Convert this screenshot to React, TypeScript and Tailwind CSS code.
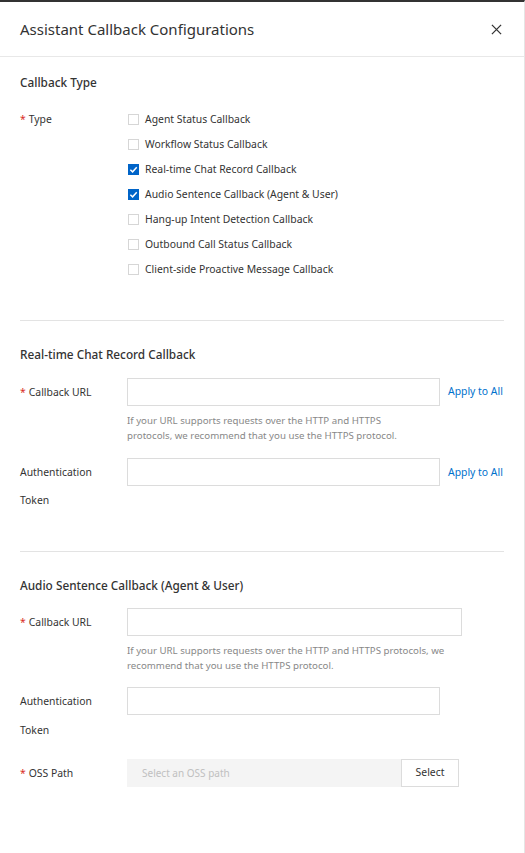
import React from "react";

const font = { fontFamily: '"Noto Sans", "Open Sans", sans-serif' };

const Check: React.FC<{ checked?: boolean; label: string }> = ({ checked, label }) => (
  <label className="flex items-center h-[25px] gap-[6px]">
    {checked ? (
      <span className="w-[11px] h-[11px] bg-[#0064c8] flex items-center justify-center">
        <svg width="9" height="9" viewBox="0 0 10 10">
          <path d="M1.5 5.2 L4 7.6 L8.6 2.4" stroke="white" strokeWidth="1.6" fill="none" />
        </svg>
      </span>
    ) : (
      <span className="w-[11px] h-[11px] border border-[#d6d6d6] bg-white" />
    )}
    <span className="text-[10.4px] text-[#333]">{label}</span>
  </label>
);

const Req = () => <span className="text-[#d93026] mr-[3px]">*</span>;

const Input: React.FC<{ w: string }> = ({ w }) => (
  <div className={`${w} h-[28px] border border-[#dcdcdc] bg-white`} />
);

const Help: React.FC<{ children: React.ReactNode; w: string }> = ({ children, w }) => (
  <p className={`${w} text-[9.7px] leading-[15px] text-[#888] mt-[7px]`}>{children}</p>
);

const App: React.FC = () => {
  return (
    <div style={font} className="w-[525px] h-[853px] bg-white border-t-2 border-[#333] border-r border-r-[#e5e5e5] overflow-hidden text-[#333]">
      <div className="h-[55px] flex items-center justify-between px-5 border-b border-[#e8e8e8]">
        <h1 className="text-[15px] text-[#333]">Assistant Callback Configurations</h1>
        <svg width="11" height="11" viewBox="0 0 12 12" className="mr-[2px]">
          <path d="M1 1 L11 11 M11 1 L1 11" stroke="#333" strokeWidth="1.4" />
        </svg>
      </div>

      <div className="px-5">
        <h2 className="text-[11.8px] font-medium mt-[16px] leading-[18px]">Callback Type</h2>
        <div className="flex mt-[16px]">
          <div className="w-[108px] text-[10.4px] leading-[25px]">
            <Req />Type
          </div>
          <div className="flex flex-col">
            <Check label="Agent Status Callback" />
            <Check label="Workflow Status Callback" />
            <Check checked label="Real-time Chat Record Callback" />
            <Check checked label="Audio Sentence Callback (Agent & User)" />
            <Check label="Hang-up Intent Detection Callback" />
            <Check label="Outbound Call Status Callback" />
            <Check label="Client-side Proactive Message Callback" />
          </div>
        </div>

        <div className="border-t border-[#e3e3e3] mt-[38px]" />

        <h2 className="text-[11.8px] font-medium mt-[24px] leading-[18px]">Real-time Chat Record Callback</h2>
        <div className="flex mt-[15px]">
          <div className="w-[107px] text-[10.4px] leading-[28px]">
            <Req />Callback URL
          </div>
          <div>
            <div className="flex items-center">
              <Input w="w-[313px]" />
              <span className="ml-[8px] text-[10.4px] whitespace-nowrap text-[#0070cc]">Apply to All</span>
            </div>
            <Help w="w-[300px]">
              If your URL supports requests over the HTTP and HTTPS protocols, we recommend that you use the HTTPS protocol.
            </Help>
          </div>
        </div>
        <div className="flex mt-[15px]">
          <div className="w-[107px] text-[10.4px] leading-[28px]">
            Authentication
            <div>Token</div>
          </div>
          <div className="flex items-start">
            <Input w="w-[313px]" />
            <span className="ml-[8px] text-[10.4px] leading-[28px] whitespace-nowrap text-[#0070cc]">Apply to All</span>
          </div>
        </div>

        <div className="border-t border-[#e3e3e3] mt-[37px]" />

        <h2 className="text-[11.8px] font-medium mt-[24px] leading-[18px]">Audio Sentence Callback (Agent &amp; User)</h2>
        <div className="flex mt-[14px]">
          <div className="w-[107px] text-[10.4px] leading-[28px]">
            <Req />Callback URL
          </div>
          <div>
            <Input w="w-[335px]" />
            <Help w="w-[335px]">
              If your URL supports requests over the HTTP and HTTPS protocols, we recommend that you use the HTTPS protocol.
            </Help>
          </div>
        </div>
        <div className="flex mt-[14px]">
          <div className="w-[107px] text-[10.4px] leading-[29px]">
            Authentication
            <div>Token</div>
          </div>
          <Input w="w-[313px]" />
        </div>
        <div className="flex mt-[14px]">
          <div className="w-[107px] text-[10.4px] leading-[28px]">
            <Req />OSS Path
          </div>
          <div className="flex h-[28px]">
            <div className="w-[274px] bg-[#f4f4f4] text-[10px] text-[#c0c0c0] flex items-center pl-[15px]">
              Select an OSS path
            </div>
            <div className="w-[58px] border border-[#dcdcdc] bg-white text-[10.4px] flex items-center justify-center">
              Select
            </div>
          </div>
        </div>
      </div>
    </div>
  );
};

export default App;
